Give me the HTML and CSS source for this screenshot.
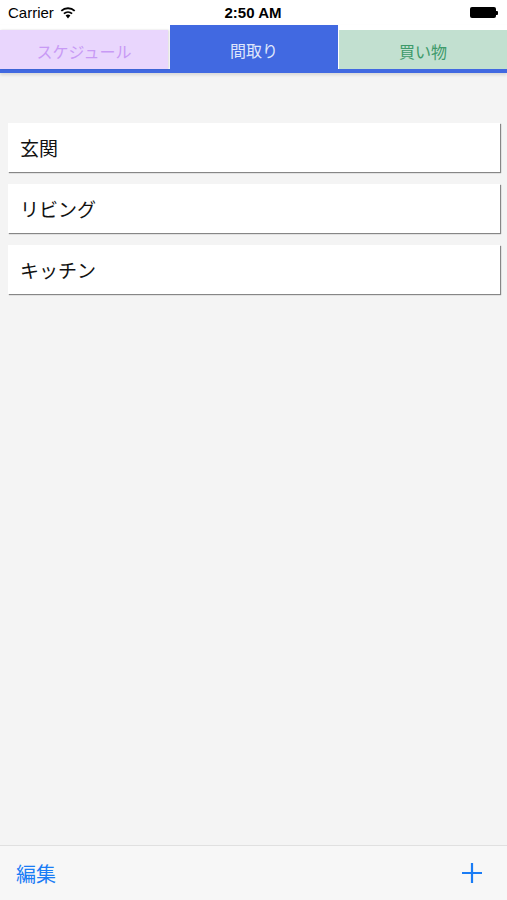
FILE: index.html
```html
<!DOCTYPE html>
<html lang="ja">
<head>
    <meta charset="UTF-8">
    <meta name="viewport" content="width=device-width, initial-scale=1.0">
    <title>間取り</title>
    <link rel="stylesheet" href="styles.css">
</head>
<body>
    <div class="status-bar">
        <div class="status-left">
            <span>Carrier</span>
            <svg class="wifi" width="16" height="12" viewBox="0 0 16 12">
                <path d="M8 11.5 L5.6 8.6 A3.6 3.6 0 0 1 10.4 8.6 Z" fill="#000"/>
                <path d="M3.9 6.6 A6.2 6.2 0 0 1 12.1 6.6" stroke="#000" stroke-width="1.8" fill="none"/>
                <path d="M1.3 3.9 A9.8 9.8 0 0 1 14.7 3.9" stroke="#000" stroke-width="1.8" fill="none"/>
            </svg>
        </div>
        <div class="status-time">2:50 AM</div>
        <div class="status-right">
            <span class="battery"></span><span class="battery-tip"></span>
        </div>
    </div>

    <div class="tabs">
        <div class="tab tab-schedule">スケジュール</div>
        <div class="tab tab-active">間取り</div>
        <div class="tab tab-shopping">買い物</div>
    </div>

    <div class="content">
        <div class="room">玄関</div>
        <div class="room">リビング</div>
        <div class="room">キッチン</div>
    </div>

    <div class="toolbar">
        <span class="edit">編集</span>
        <svg class="add" width="22" height="22" viewBox="0 0 22 22">
            <path d="M11 1 V21 M1 11 H21" stroke="#1a7cf5" stroke-width="2.2"/>
        </svg>
    </div>
</body>
</html>
```

FILE: styles.css
```css
body {
    margin: 0;
    height: 900px;
    display: flex;
    flex-direction: column;
    background-color: #f4f4f4;
    font-family: "Noto Sans CJK JP", "Liberation Sans", sans-serif;
    overflow: hidden;
}

.status-bar {
    height: 25px;
    background-color: #fff;
    display: flex;
    align-items: center;
    justify-content: space-between;
    padding: 0 8px;
    font-family: "Liberation Sans", Arial, sans-serif;
    font-size: 15px;
}

.status-left {
    display: flex;
    align-items: center;
    gap: 6px;
    width: 120px;
}

.status-time {
    font-weight: bold;
    font-size: 15px;
}

.status-right {
    width: 120px;
    display: flex;
    justify-content: flex-end;
    align-items: center;
    padding-right: 1px;
}

.battery {
    width: 26px;
    height: 11px;
    background-color: #000;
    border-radius: 2px;
}

.battery-tip {
    width: 2px;
    height: 4px;
    background-color: #000;
    border-radius: 0 1px 1px 0;
}

.tabs {
    display: flex;
    align-items: flex-end;
    height: 44px;
    border-bottom: 4px solid #4169e1;
    box-shadow: 0 2px 3px rgba(0, 0, 0, 0.12);
    background-color: #fff;
}

.tab {
    flex: 1;
    height: 39px;
    display: flex;
    align-items: center;
    justify-content: center;
    font-size: 16px;
    box-sizing: border-box;
    padding-top: 2px;
}

.tab-schedule {
    background-color: #e9d6fd;
    color: #c89af5;
    box-shadow: 1px 0 2px rgba(0, 0, 0, 0.15);
}

.tab-active {
    height: 44px;
    background-color: #4169e1;
    color: #dfe6fb;
    margin: 0 1px 0 2px;
    padding-top: 5px;
}

.tab-shopping {
    background-color: #c2e0d0;
    color: #3e9a6a;
}

.content {
    flex: 1;
    padding: 50px 7px 0 8px;
    display: flex;
    flex-direction: column;
    gap: 12px;
}

.room {
    height: 49px;
    background-color: #fff;
    display: flex;
    align-items: center;
    padding-left: 12px;
    font-size: 19px;
    color: #111;
    box-shadow: 1px 1px 1px rgba(0, 0, 0, 0.45);
}

.toolbar {
    height: 54px;
    border-top: 1px solid #e0e0e0;
    background-color: #f7f7f7;
    display: flex;
    align-items: center;
    justify-content: space-between;
    padding: 0 24px 0 16px;
}

.edit {
    color: #1a7cf5;
    font-size: 20px;
}
```
